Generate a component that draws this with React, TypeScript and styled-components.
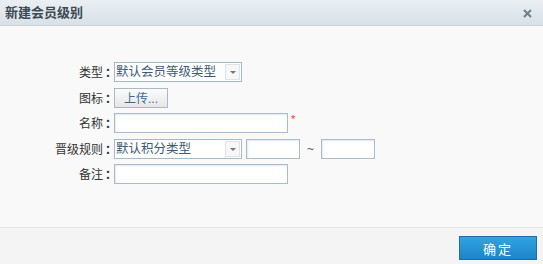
import styled, { createGlobalStyle } from "styled-components";

const GlobalStyle = createGlobalStyle`
  html, body {
    margin: 0;
    padding: 0;
    background: #f9f9f9;
  }
  body {
    font-family: "Liberation Sans", "Noto Sans CJK SC", sans-serif;
    font-size: 12px;
    color: #333;
  }
`;

export default function App() {
  return (
    <>
      <GlobalStyle />
      <Dialog>
        <Header>
          <Title>新建会员级别</Title>
          <CloseBtn aria-label="关闭">
            <svg width="9" height="9" viewBox="0 0 9 9">
              <path d="M1 1L8 8M8 1L1 8" stroke="#6d7f8c" strokeWidth="2" />
            </svg>
          </CloseBtn>
        </Header>
        <Body>
          <Form>
            <Label>类型<Colon>：</Colon></Label>
            <Field>
              <Select>
                <span>默认会员等级类型</span>
                <Arrow />
              </Select>
            </Field>

            <Label>图标<Colon>：</Colon></Label>
            <Field>
              <UploadBtn>上传...</UploadBtn>
            </Field>

            <Label>名称<Colon>：</Colon></Label>
            <Field>
              <Input $w={174} />
              <Required>*</Required>
            </Field>

            <Label>晋级规则<Colon>：</Colon></Label>
            <Field>
              <Select>
                <span>默认积分类型</span>
                <Arrow />
              </Select>
              <Input $w={54} />
              <Tilde>~</Tilde>
              <Input $w={54} />
            </Field>

            <Label>备注<Colon>：</Colon></Label>
            <Field>
              <Input $w={174} />
            </Field>
          </Form>
        </Body>
        <Footer>
          <ConfirmBtn>确定</ConfirmBtn>
        </Footer>
      </Dialog>
    </>
  );
}

const Dialog = styled.div`
  width: 543px;
  height: 264px;
  display: flex;
  flex-direction: column;
  background: #f9f9f9;
`;

const Header = styled.div`
  height: 26px;
  box-sizing: border-box;
  display: flex;
  align-items: center;
  justify-content: space-between;
  padding: 0 11px 0 5px;
  background: linear-gradient(#e9eff3, #d9e1e6);
  border-bottom: 1px solid #c9d3d9;
`;

const Title = styled.h1`
  margin: 0;
  font-size: 13px;
  font-weight: bold;
  color: #3e4a54;
  line-height: 26px;
`;

const CloseBtn = styled.span`
  display: flex;
  width: 9px;
  height: 9px;
  margin-top: 1px;
`;

const Body = styled.div`
  flex: 1;
  padding-top: 36px;
`;

const Form = styled.div`
  display: grid;
  grid-template-columns: 111px auto;
  grid-auto-rows: 20px;
  row-gap: 5.5px;
  column-gap: 3px;
`;

const Label = styled.label`
  display: flex;
  justify-content: flex-end;
  align-items: center;
  line-height: 20px;
  font-family: "Noto Sans CJK SC", sans-serif;
  font-size: 12px;
  color: #333;
  white-space: nowrap;
`;

const Colon = styled.span`
  display: inline-block;
  width: 6px;
  margin-left: 2px;
  font-weight: bold;
  overflow: visible;
`;

const Field = styled.div`
  display: flex;
  align-items: center;
`;

const Select = styled.div`
  position: relative;
  width: 128px;
  height: 20px;
  box-sizing: border-box;
  border: 1px solid #a6b9c7;
  background: #fff;
  color: #3c5a77;
  line-height: 18px;
  padding-left: 1px;
  margin-right: 4px;
  span {
    font-size: 12.5px;
  }
`;

const Arrow = styled.i`
  position: absolute;
  right: 1px;
  top: 1px;
  width: 15px;
  height: 16px;
  box-sizing: border-box;
  border: 1px solid #dde3e8;
  background: #f7f7f7;
  &::after {
    content: "";
    position: absolute;
    left: 4px;
    top: 6px;
    border-left: 3px solid transparent;
    border-right: 3px solid transparent;
    border-top: 3px solid #777;
  }
`;

const Input = styled.div<{ $w: number }>`
  width: ${(p) => p.$w}px;
  height: 20px;
  box-sizing: border-box;
  border: 1px solid #a9bccb;
  background: #fff;
  box-shadow: inset 1px 1px 2px #e4e8ec;
`;

const Required = styled.span`
  color: #e33;
  font-size: 11px;
  margin-left: 3px;
  align-self: flex-start;
  line-height: 12px;
`;

const Tilde = styled.span`
  width: 21px;
  text-align: center;
  color: #556;
`;

const UploadBtn = styled.button`
  width: 54px;
  height: 20px;
  padding: 0;
  border: 1px solid #a9b9c6;
  background: linear-gradient(#fcfcfc, #e6e6e6);
  color: #3a6a96;
  font-family: "Liberation Sans", "Noto Sans CJK SC", sans-serif;
  font-size: 12px;
`;

const Footer = styled.div`
  height: 37px;
  box-sizing: border-box;
  border-top: 1px solid #e6e6e6;
  background: #f4f4f4;
  display: flex;
  justify-content: flex-end;
  padding: 8px 6px 0 0;
`;

const ConfirmBtn = styled.button`
  width: 78px;
  height: 24px;
  border: 1px solid #1e6da8;
  background: linear-gradient(#30a4e2, #1d84c9);
  color: #fff;
  font-family: "Liberation Sans", "Noto Sans CJK SC", sans-serif;
  font-size: 13px;
  letter-spacing: 2px;
  padding: 0;
`;
